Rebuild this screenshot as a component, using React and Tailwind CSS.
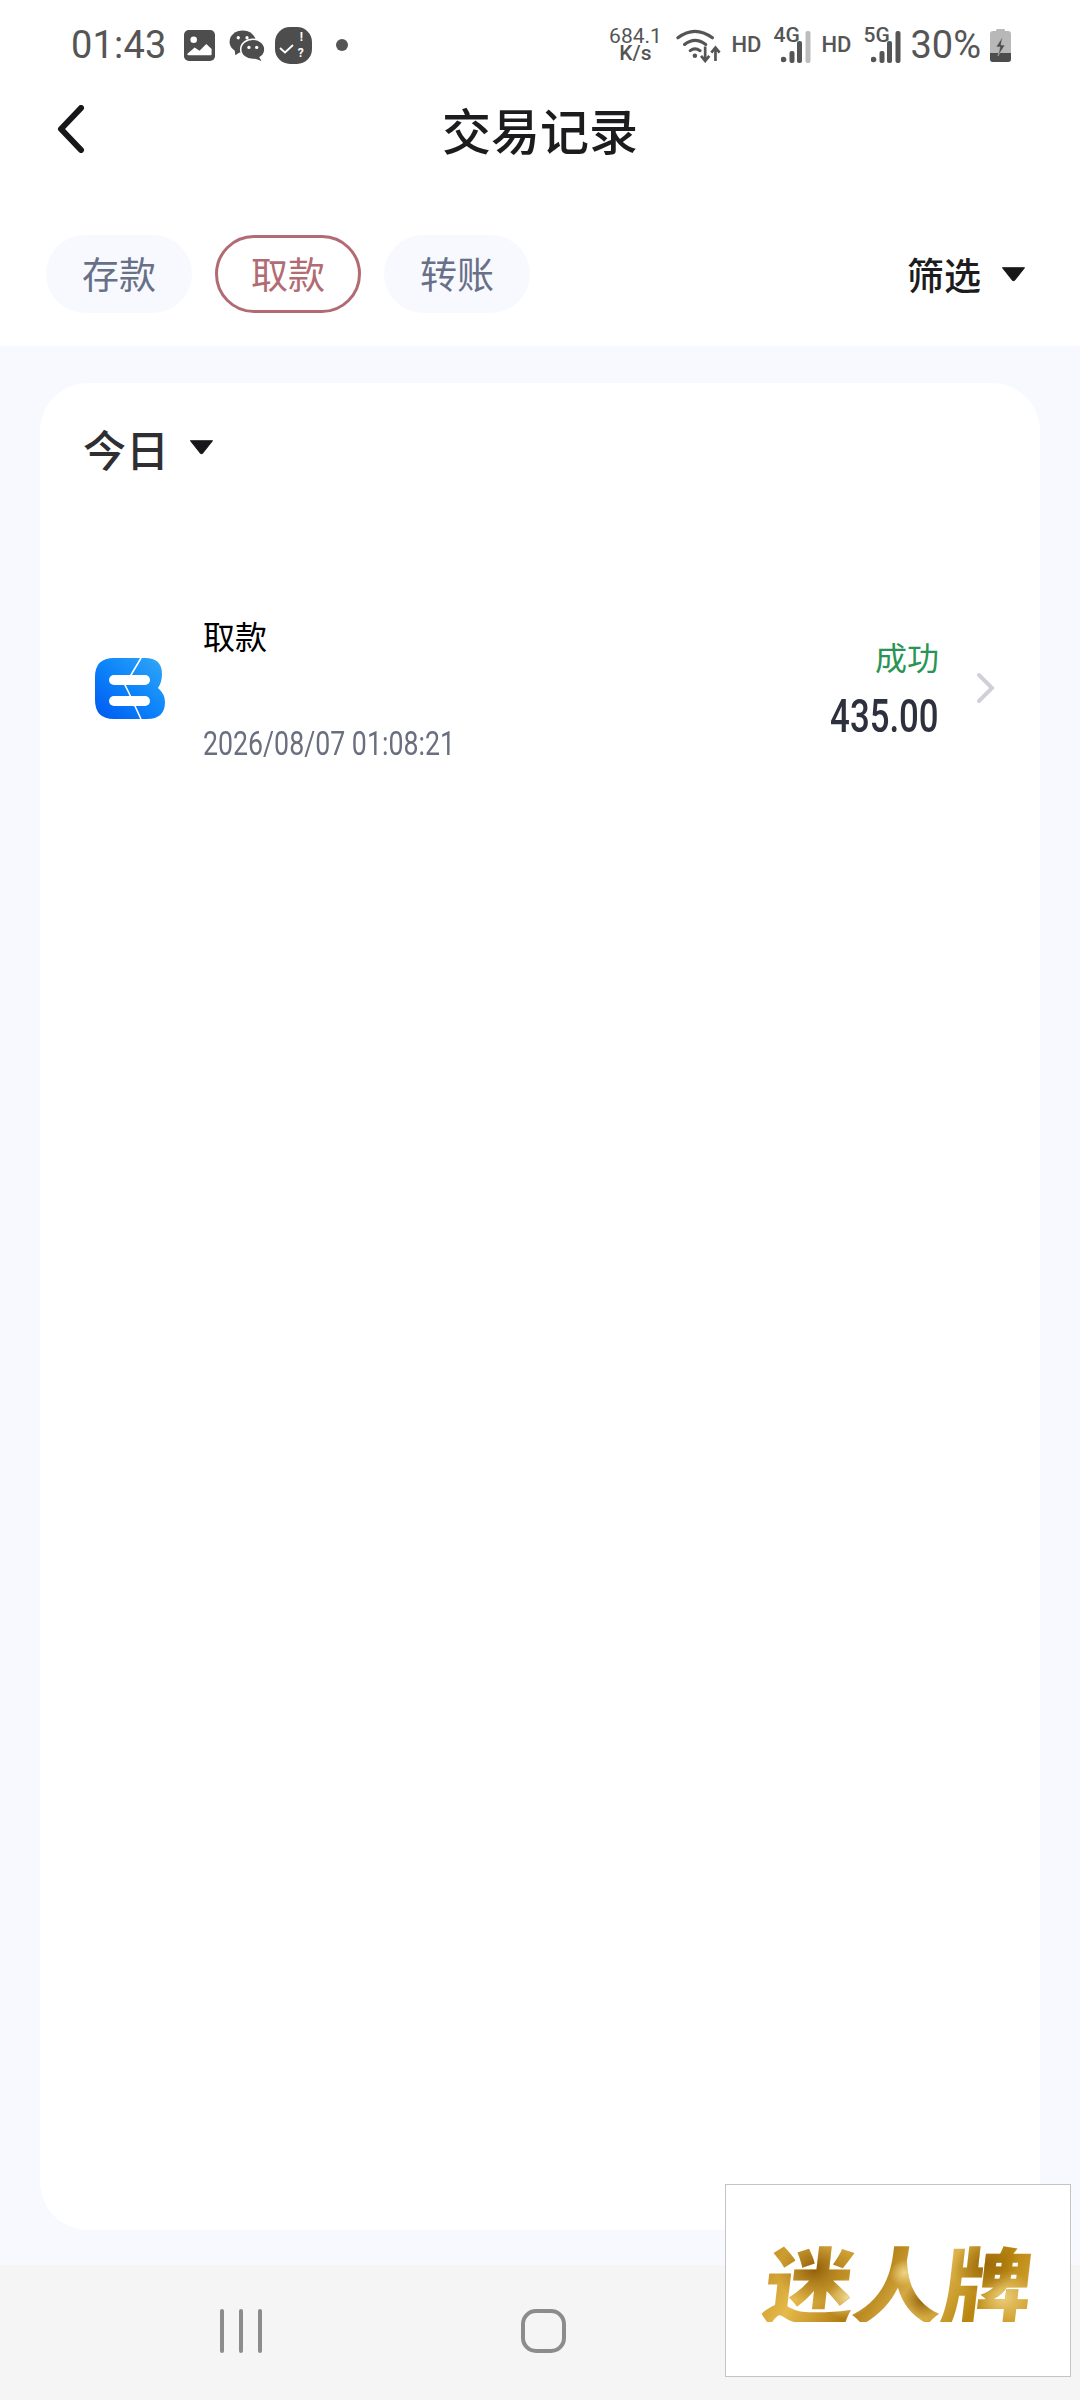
const cjk = "font-['Noto_Sans_CJK_SC','Noto_Sans',sans-serif]";

function Caret({ className }) {
  return (
    <svg viewBox="0 0 24 15" className={className}>
      <path d="M1.500 1.500h21L13 13.500q-1 1-2 0z" fill="#17171a" stroke="#17171a" strokeWidth="1" strokeLinejoin="round" />
    </svg>
  );
}

function Bars({ label, dim }) {
  return (
    <div className="relative w-[38px] h-[36px]">
      <span className="absolute left-0 top-[-2px] text-[21px] leading-[20px] font-medium text-[#555]">{label}</span>
      <svg viewBox="0 0 30 32" className="absolute right-0 bottom-0 w-[30px] h-[32px]">
        <circle cx="2.500" cy="28.500" r="2.800" fill="#555" />
        <rect x="8.500" y="20" width="5" height="12" rx="2" fill="#555" />
        <rect x="16" y="10" width="5" height="22" rx="2" fill="#555" />
        <rect x="24.500" y="0" width="5" height="32" rx="2" fill={dim ? "#bdbdbd" : "#555"} />
      </svg>
    </div>
  );
}

function StatusBar() {
  return (
    <div className="h-[90px] flex items-center justify-between pl-[71px] pr-[69px] font-['Roboto',sans-serif] text-[#555]">
      <div className="flex items-center">
        <span className="text-[38px] leading-none tracking-[0.2px]">01:43</span>
        {/* gallery */}
        <svg viewBox="0 0 32 32" className="w-[31px] h-[31px] ml-[17px]">
          <rect width="32" height="32" rx="5" fill="#4d4d4d" />
          <circle cx="10" cy="10" r="3.400" fill="#fff" />
          <path d="M3.500 24.500l7.500-6.500 5 3.500 7-7 5.500 5v5.500q0 1-1 1h-23q-1 0-1-1z" fill="#fff" />
        </svg>
        {/* wechat */}
        <svg viewBox="0 0 36 32" className="w-[36px] h-[31px] ml-[14px]">
          <ellipse cx="13.500" cy="12" rx="13.500" ry="11.500" fill="#4d4d4d" />
          <path d="M5 19l1 7 6-4z" fill="#4d4d4d" />
          <ellipse cx="24" cy="20" rx="12.500" ry="10.500" fill="#4d4d4d" stroke="#fff" strokeWidth="1.600" />
          <path d="M30 27l3 5-8-3z" fill="#4d4d4d" />
          <circle cx="9" cy="8" r="1.700" fill="#fff" />
          <circle cx="18" cy="8" r="1.700" fill="#fff" />
          <circle cx="20" cy="18" r="1.700" fill="#fff" />
          <circle cx="28" cy="18" r="1.700" fill="#fff" />
        </svg>
        {/* check badge */}
        <div className="relative ml-[10px] w-[37px] h-[37px] rounded-[15px] bg-[#4d4d4d]">
          <svg viewBox="0 0 37 37" className="absolute inset-0 w-[37px] h-[37px]">
            <path d="M5 21l5 4.500 8-7.500" fill="none" stroke="#fff" strokeWidth="1.800" />
          </svg>
          <span className="absolute left-[25px] top-[4px] text-[12px] leading-[12px] font-bold text-white">!</span>
          <span className="absolute left-[23px] top-[20px] text-[12px] leading-[12px] font-bold text-white">?</span>
        </div>
        <div className="ml-[24px] w-[12px] h-[12px] rounded-full bg-[#555]" />
      </div>
      <div className="flex items-center">
        <div className="w-[54px] text-center text-[21px] leading-[17px] text-[#555] flex flex-col items-center">
          <span>684.1</span>
          <span className="font-medium">K/s</span>
        </div>
        <svg viewBox="0 0 44 34" className="w-[46px] h-[35px] ml-[14px]">
          <path d="M1.500 9.500Q18-3 35 9.500M8 16Q18 8 28.500 16M13.500 22Q18 18.500 23 22" fill="none" stroke="#555" strokeWidth="3" strokeLinecap="round" />
          <circle cx="18" cy="27" r="2.200" fill="#555" />
          <path d="M28 18v13M24 27l4 5 4-5M38 32V20M34 24l4-5 4 5" fill="none" stroke="#555" strokeWidth="2.600" />
        </svg>
        <span className="ml-[9px] text-[22px] font-medium leading-none">HD</span>
        <div className="ml-[12px]"><Bars label="4G" dim /></div>
        <span className="ml-[10px] text-[22px] font-medium leading-none">HD</span>
        <div className="ml-[12px]"><Bars label="5G" /></div>
        <span className="ml-[9px] text-[38px] leading-none">30%</span>
        <svg viewBox="0 0 21 33" className="w-[21px] h-[33px] ml-[9px]">
          <path d="M7 0h7q1 0 1 2h3q3 0 3 3v25q0 3-3 3H3q-3 0-3-3V5q0-3 3-3h3q0-2 1-2z" fill="#b8b8b8" />
          <path d="M0 24h21v6q0 3-3 3H3q-3 0-3-3z" fill="#4d4d4d" />
          <path d="M12.500 8L6 18h4l-2 9 7-11h-4z" fill="#4d4d4d" stroke="#b8b8b8" strokeWidth="0.600" />
        </svg>
      </div>
    </div>
  );
}

function Tab({ label, active }) {
  return (
    <div
      className={`w-[146px] h-[78px] rounded-full flex items-center justify-center text-[37px] ${
        active ? "border-[3px] border-[#b26b73] text-[#b26b73] bg-white" : "bg-[#f7f9fe] text-[#687087]"
      }`}
    >
      {label}
    </div>
  );
}

function BankLogo() {
  return (
    <svg viewBox="0 0 70 61" className="w-[70px] h-[61px] shrink-0">
      <defs>
        <linearGradient id="logoBlue" x1="0" y1="1" x2="1" y2="0">
          <stop offset="0" stopColor="#0058f0" />
          <stop offset="0.5" stopColor="#0c84fa" />
          <stop offset="1" stopColor="#33a8f6" />
        </linearGradient>
      </defs>
      <path
        d="M19 0H50Q67 0 67 16Q67 24 63 30Q70 36 70 44Q70 61 52 61H19Q0 61 0 42V19Q0 0 19 0Z"
        fill="url(#logoBlue)"
      />
      <rect x="14" y="17" width="41" height="10" rx="5" fill="#fff" />
      <rect x="14" y="38" width="41" height="10" rx="5" fill="#fff" />
      <path d="M46 0L30 27L33 33L46 61" fill="none" stroke="#fff" strokeWidth="1.600" />
    </svg>
  );
}

function RecordRow() {
  return (
    <div className="flex mt-[149px] pl-[55px] pr-[44px] h-[141px]">
      <div className="pt-[39px]">
        <BankLogo />
      </div>
      <div className="ml-[38px] flex flex-col justify-between flex-1">
        <span className="text-[32px] leading-[32px] text-black">取款</span>
        <span className="font-['Roboto',sans-serif] text-[33px] leading-[32px] text-[#6a6f80] origin-left scale-x-[0.81] whitespace-nowrap">
          2026/08/07 01:08:21
        </span>
      </div>
      <div className="flex flex-col items-end pt-[21px]">
        <span className="text-[32px] leading-[32px] text-[#2a9455]">成功</span>
        <span className="mt-[21px] font-['Roboto',sans-serif] font-medium text-[47px] leading-[46px] text-[#2d303d] origin-right scale-x-[0.74]">
          435.00
        </span>
      </div>
      <svg viewBox="0 0 20 32" className="w-[20px] h-[32px] ml-[37px] mt-[53px] shrink-0">
        <path d="M3 3l13 13L3 29" fill="none" stroke="#d0d0dc" strokeWidth="4" strokeLinecap="round" />
      </svg>
    </div>
  );
}

export default function App() {
  return (
    <div className={`relative w-[1080px] h-[2400px] flex flex-col bg-white overflow-hidden ${cjk}`}>
      <StatusBar />

      {/* header */}
      <div className="relative h-[76px] flex items-center justify-center">
        <svg viewBox="0 0 28 48" className="absolute left-[57px] top-[15px] w-[28px] h-[48px]">
          <path d="M24 3L4 24l20 21" fill="none" stroke="#17171a" strokeWidth="6" strokeLinecap="round" strokeLinejoin="round" />
        </svg>
        <span className="text-[49px] leading-none font-medium text-[#1c1c1e]">交易记录</span>
      </div>

      {/* tabs */}
      <div className="flex items-center justify-between pt-[69px] pb-[33px] pl-[46px] pr-[54px]">
        <div className="flex gap-[23px]">
          <Tab label="存款" />
          <Tab label="取款" active />
          <Tab label="转账" />
        </div>
        <div className="flex items-center">
          <span className="text-[37px] leading-none font-medium text-[#1c1c1e]">筛选</span>
          <Caret className="w-[25px] h-[16px] ml-[20px]" />
        </div>
      </div>

      {/* list */}
      <div className="flex-1 bg-[#f7f9fe] px-[40px] pt-[37px] pb-[35px]">
        <div className="h-full bg-white rounded-[48px] pt-[43px]">
          <div className="flex items-center pl-[43px]">
            <span className="text-[43px] leading-[44px] font-medium text-[#2f2f33]">今日</span>
            <Caret className="w-[25px] h-[16px] ml-[20px] mb-[3px]" />
          </div>
          <RecordRow />
        </div>
      </div>

      {/* android nav */}
      <div className="h-[135px] bg-[#f5f5f5] flex items-center pl-[220px] pb-[4px]">
        <div className="flex gap-[15px]">
          <div className="w-[4px] h-[44px] rounded-full bg-[#8c8c8c]" />
          <div className="w-[4px] h-[44px] rounded-full bg-[#8c8c8c]" />
          <div className="w-[4px] h-[44px] rounded-full bg-[#8c8c8c]" />
        </div>
        <div className="ml-[259px] w-[45px] h-[44px] rounded-[15px] border-[4px] border-[#8c8c8c]" />
      </div>

      {/* floating watermark */}
      <div className="absolute left-[725px] top-[2184px] w-[346px] h-[193px] bg-white border border-[#c4c4c4] flex items-center justify-center">
        <span className="text-[90px] leading-none font-black whitespace-nowrap -skew-x-6 scale-y-[0.92] tracking-[-1px] text-transparent bg-clip-text bg-[radial-gradient(circle_at_18%_35%,#8f5c06_0,transparent_16%),radial-gradient(circle_at_32%_70%,#f3dc94_0,transparent_12%),radial-gradient(circle_at_52%_40%,#f0d484_0,transparent_10%),radial-gradient(circle_at_60%_72%,#8f5c06_0,transparent_12%),radial-gradient(circle_at_82%_30%,#9c6808_0,transparent_14%),radial-gradient(circle_at_90%_70%,#edcf7a_0,transparent_12%),linear-gradient(115deg,#c08d20_0%,#e5b94a_20%,#b07c12_40%,#e2bb55_60%,#b8860f_80%,#d9a93a_100%)]">
          迷人牌
        </span>
      </div>
    </div>
  );
}
